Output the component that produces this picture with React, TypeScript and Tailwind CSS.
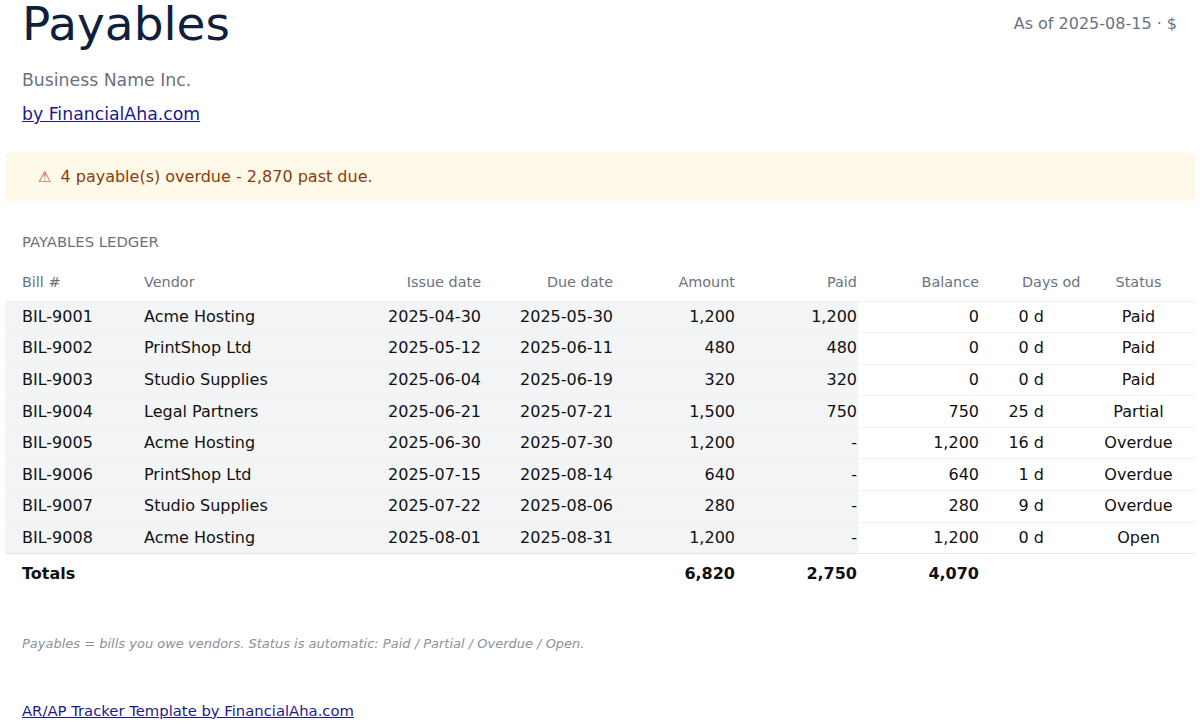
import React from "react";

type Bill = {
  id: string;
  vendor: string;
  issued: string;
  due: string;
  amount: string;
  paid: string;
  balance: string;
  days: string;
  status: string;
};

const BILLS: Bill[] = [
  { id: "BIL-9001", vendor: "Acme Hosting", issued: "2025-04-30", due: "2025-05-30", amount: "1,200", paid: "1,200", balance: "0", days: "0 d", status: "Paid" },
  { id: "BIL-9002", vendor: "PrintShop Ltd", issued: "2025-05-12", due: "2025-06-11", amount: "480", paid: "480", balance: "0", days: "0 d", status: "Paid" },
  { id: "BIL-9003", vendor: "Studio Supplies", issued: "2025-06-04", due: "2025-06-19", amount: "320", paid: "320", balance: "0", days: "0 d", status: "Paid" },
  { id: "BIL-9004", vendor: "Legal Partners", issued: "2025-06-21", due: "2025-07-21", amount: "1,500", paid: "750", balance: "750", days: "25 d", status: "Partial" },
  { id: "BIL-9005", vendor: "Acme Hosting", issued: "2025-06-30", due: "2025-07-30", amount: "1,200", paid: "-", balance: "1,200", days: "16 d", status: "Overdue" },
  { id: "BIL-9006", vendor: "PrintShop Ltd", issued: "2025-07-15", due: "2025-08-14", amount: "640", paid: "-", balance: "640", days: "1 d", status: "Overdue" },
  { id: "BIL-9007", vendor: "Studio Supplies", issued: "2025-07-22", due: "2025-08-06", amount: "280", paid: "-", balance: "280", days: "9 d", status: "Overdue" },
  { id: "BIL-9008", vendor: "Acme Hosting", issued: "2025-08-01", due: "2025-08-31", amount: "1,200", paid: "-", balance: "1,200", days: "0 d", status: "Open" },
];

// shaded cells (bill # through paid) vs plain cells
const shaded = "bg-[#f3f4f6]";

export default function App() {
  return (
    <div
      className="min-h-screen bg-white text-[#111] px-[5px]"
      style={{ fontFamily: '"DejaVu Sans", Verdana, sans-serif' }}
    >
      {/* Header */}
      <div className="-mt-[4px] flex items-center justify-between pl-[17px] pr-[18px]">
        <h1 className="text-[47px] leading-[56px] font-normal text-[#0f1f3d]">Payables</h1>
        <span className="text-[16px] text-[#6b7280]">As of 2025-08-15 · $</span>
      </div>
      <p className="mt-[16px] pl-[17px] text-[17.3px] leading-[24px] text-[#6b7280]">
        Business Name Inc.
      </p>
      <a
        href="#"
        className="mt-[10px] ml-[17px] inline-block text-[17.3px] leading-[24px] text-[#1a1a8c] underline"
      >
        by FinancialAha.com
      </a>

      {/* Overdue banner */}
      <div className="mt-[26px] flex h-[48px] items-center bg-[#fef9e8] pl-[33px] text-[16px] text-[#8a3c0f]">
        <span className="mr-[9px] text-[15px] text-[#a0603a]">⚠</span>
        <span>4 payable(s) overdue - 2,870 past due.</span>
      </div>

      <div className="mt-[31px] pl-[17px] text-[14.8px] leading-[20px] text-[#6b7280]">
        PAYABLES LEDGER
      </div>

      {/* Ledger */}
      <table className="mt-[13px] w-full table-fixed border-collapse text-[16px]">
        <colgroup>
          <col className="w-[122px]" />
          <col className="w-[223px]" />
          <col className="w-[132px]" />
          <col className="w-[132px]" />
          <col className="w-[122px]" />
          <col className="w-[122px]" />
          <col className="w-[145px]" />
          <col className="w-[79px]" />
          <col />
        </colgroup>
        <thead>
          <tr className="h-[36px] text-[14.4px] text-[#6b7280]">
            <th className="pl-[17px] text-left font-normal">Bill #</th>
            <th className="pl-[17px] text-left font-normal">Vendor</th>
            <th className="pr-[1px] text-right font-normal">Issue date</th>
            <th className="pr-[1px] text-right font-normal">Due date</th>
            <th className="pr-[1px] text-right font-normal">Amount</th>
            <th className="pr-[1px] text-right font-normal">Paid</th>
            <th className="pr-[24px] text-right font-normal">Balance</th>
            <th className="pl-[19px] text-left font-normal whitespace-nowrap">Days od</th>
            <th className="text-center font-normal">Status</th>
          </tr>
        </thead>
        <tbody>
          {BILLS.map((b, i) => {
            const last = i === BILLS.length - 1;
            const row = `h-[31.6px] border-t border-[#f0f1f4] ${last ? "border-b border-b-[#e5e7eb]" : ""}`;
            return (
              <tr key={b.id} className={row}>
                <td className={`${shaded} pl-[17px]`}>{b.id}</td>
                <td className={`${shaded} pl-[17px]`}>{b.vendor}</td>
                <td className={`${shaded} pr-[1px] text-right`}>{b.issued}</td>
                <td className={`${shaded} pr-[1px] text-right`}>{b.due}</td>
                <td className={`${shaded} pr-[1px] text-right`}>{b.amount}</td>
                <td className={`${shaded} pr-[1px] text-right`}>{b.paid}</td>
                <td className="pr-[24px] text-right">{b.balance}</td>
                <td className="pr-[38px] text-right whitespace-nowrap">{b.days}</td>
                <td className="text-center">{b.status}</td>
              </tr>
            );
          })}
          <tr className="h-[39px] font-bold">
            <td className="pl-[17px]">Totals</td>
            <td />
            <td />
            <td />
            <td className="pr-[1px] text-right">6,820</td>
            <td className="pr-[1px] text-right">2,750</td>
            <td className="pr-[24px] text-right">4,070</td>
            <td />
            <td />
          </tr>
        </tbody>
      </table>

      <p className="mt-[41px] pl-[17px] text-[13px] leading-[20px] italic text-[#8b919c]">
        Payables = bills you owe vendors. Status is automatic: Paid / Partial / Overdue / Open.
      </p>

      <a
        href="#"
        className="mt-[47px] ml-[17px] inline-block text-[14.8px] leading-[20px] text-[#1a1a8c] underline"
      >
        AR/AP Tracker Template by FinancialAha.com
      </a>
    </div>
  );
}
